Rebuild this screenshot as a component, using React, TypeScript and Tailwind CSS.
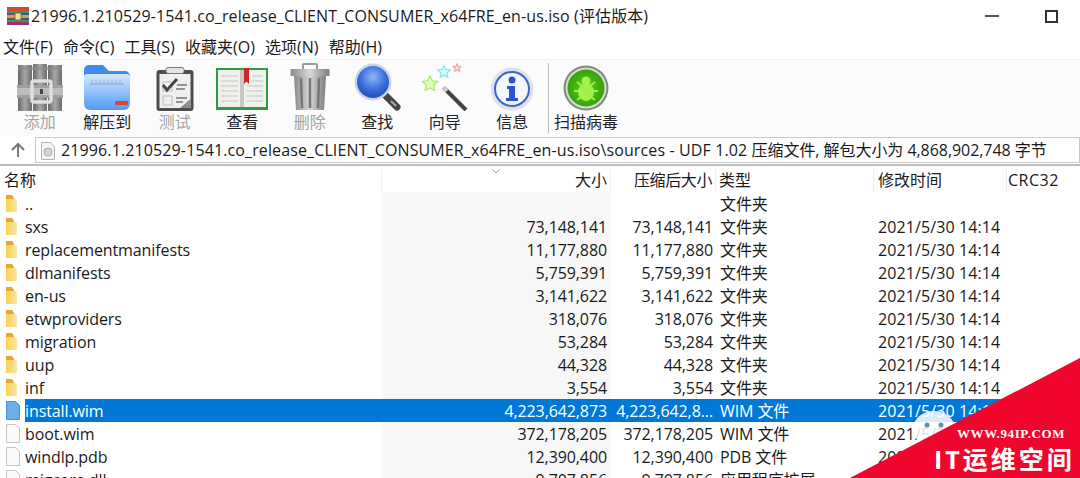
import React from 'react';

const FONT = '"Open Sans", "Noto Sans CJK SC", sans-serif';

interface Row {
  name: string;
  size: string;
  packed: string;
  type: string;
  time: string;
  kind: 'folder' | 'file' | 'wim' | 'dll';
  selected?: boolean;
}

const T = '2021/5/30 14:14';

const rows: Row[] = [
  { name: '..', size: '', packed: '', type: '文件夹', time: '', kind: 'folder' },
  { name: 'sxs', size: '73,148,141', packed: '73,148,141', type: '文件夹', time: T, kind: 'folder' },
  { name: 'replacementmanifests', size: '11,177,880', packed: '11,177,880', type: '文件夹', time: T, kind: 'folder' },
  { name: 'dlmanifests', size: '5,759,391', packed: '5,759,391', type: '文件夹', time: T, kind: 'folder' },
  { name: 'en-us', size: '3,141,622', packed: '3,141,622', type: '文件夹', time: T, kind: 'folder' },
  { name: 'etwproviders', size: '318,076', packed: '318,076', type: '文件夹', time: T, kind: 'folder' },
  { name: 'migration', size: '53,284', packed: '53,284', type: '文件夹', time: T, kind: 'folder' },
  { name: 'uup', size: '44,328', packed: '44,328', type: '文件夹', time: T, kind: 'folder' },
  { name: 'inf', size: '3,554', packed: '3,554', type: '文件夹', time: T, kind: 'folder' },
  { name: 'install.wim', size: '4,223,642,873', packed: '4,223,642,8...', type: 'WIM 文件', time: T, kind: 'wim', selected: true },
  { name: 'boot.wim', size: '372,178,205', packed: '372,178,205', type: 'WIM 文件', time: T, kind: 'file' },
  { name: 'windlp.pdb', size: '12,390,400', packed: '12,390,400', type: 'PDB 文件', time: T, kind: 'file' },
  { name: 'migcore.dll', size: '9,707,856', packed: '9,707,856', type: '应用程序扩展', time: T, kind: 'dll' },
];

const WinRarLogo = () => (
  <svg width="22" height="18" viewBox="0 0 22 18">
    <rect x="0" y="0" width="22" height="18" fill="#7a3a86" />
    <rect x="0" y="0" width="7" height="18" fill="#6d3fa0" />
    <rect x="7" y="0" width="8" height="18" fill="#c23a34" />
    <rect x="15" y="0" width="7" height="18" fill="#2e58b4" />
    <rect x="0" y="0" width="22" height="4" fill="#d2473b" />
    <rect x="0" y="4" width="22" height="2" fill="#3f9a4c" />
    <rect x="0" y="13" width="22" height="2" fill="#3f9a4c" />
    <rect x="0" y="15" width="22" height="3" fill="#9b2f78" />
    <rect x="0" y="8" width="22" height="3" fill="#d8a53d" />
    <rect x="8" y="6" width="6" height="7" fill="#f3dfa0" stroke="#7a5a16" strokeWidth="0.8" />
  </svg>
);

const AddIcon = () => (
  <svg width="48" height="48" viewBox="0 0 48 48">
    <defs>
      <linearGradient id="bk" x1="0" x2="1" y1="0" y2="0">
        <stop offset="0" stopColor="#666" />
        <stop offset="0.5" stopColor="#a8a8a8" />
        <stop offset="1" stopColor="#6a6a6a" />
      </linearGradient>
    </defs>
    <rect x="2" y="2" width="14" height="46" rx="1" fill="url(#bk)" />
    <rect x="17" y="1" width="14" height="47" rx="1" fill="url(#bk)" />
    <rect x="32" y="2" width="14" height="46" rx="1" fill="url(#bk)" />
    <rect x="2" y="4" width="44" height="3" fill="#8b8b8b" opacity="0.7" />
    <rect x="1" y="22" width="46" height="13" fill="#a0a0a0" />
    <rect x="1" y="25" width="46" height="7" fill="#bdbdbd" />
    <rect x="16" y="18" width="19" height="21" rx="2" fill="none" stroke="#dedede" strokeWidth="3.500" />
    <rect x="24" y="26" width="3" height="5" fill="#444" />
  </svg>
);

const ExtractIcon = () => (
  <svg width="48" height="48" viewBox="0 0 48 48">
    <defs>
      <linearGradient id="fd" x1="0" x2="0" y1="0" y2="1">
        <stop offset="0" stopColor="#d5e9fd" />
        <stop offset="1" stopColor="#4f9bf5" />
      </linearGradient>
    </defs>
    <path d="M1 7a5 5 0 0 1 5-5h14l6 6h16a5 5 0 0 1 5 5v6H1z" fill="#3f8cf0" />
    <path d="M1 14c0-2 1-3 3-3h40c2 0 3 1 3 3v27a6 6 0 0 1-6 6H7a6 6 0 0 1-6-6z" fill="url(#fd)" />
    <path d="M7 21h34" stroke="#7f9fc4" strokeWidth="1" />
    <path d="M9 17v4M13 17v4M17 17v4M21 17v4M25 17v4M29 17v4M33 17v4M37 17v4" stroke="#9db7d6" strokeWidth="1" />
    <rect x="32" y="38" width="13" height="4" rx="1" fill="#e2413a" />
  </svg>
);

const TestIcon = () => (
  <svg width="38" height="44" viewBox="0 0 38 44">
    <rect x="0.5" y="3" width="37" height="41" rx="3" fill="#4d4d4d" />
    <rect x="3.5" y="7" width="31" height="34" fill="#efefed" />
    <path d="M24 41l10.500-9v9z" fill="#8c8c8c" />
    <rect x="10" y="0.5" width="18" height="6" rx="2" fill="#e4e4e4" stroke="#777" />
    <rect x="7" y="15" width="9" height="9" fill="#fafafa" stroke="#bbb" />
    <path d="M7 18l4 5 10-11" fill="none" stroke="#444" strokeWidth="3" />
    <rect x="7" y="29" width="9" height="9" fill="none" stroke="#bbb" />
    <path d="M21 18h10M20 22h9M20 31h11M20 35h7" stroke="#777" strokeWidth="1.400" />
  </svg>
);

const ViewIcon = () => (
  <svg width="52" height="44" viewBox="0 0 52 44">
    <rect x="0" y="1" width="52" height="42" fill="#2f9a46" />
    <rect x="2" y="3" width="23.500" height="37" fill="#f0f0ec" />
    <rect x="26.500" y="3" width="23.500" height="37" fill="#f0f0ec" />
    <rect x="24" y="3" width="4" height="37" fill="#c8c8c3" />
    <path d="M5 9h17M5 14h17M5 19h17M5 24h17M5 29h17M5 34h17M36 9h11M36 14h11M31 19h16M31 24h16M31 29h16M31 34h16" stroke="#c4c4c4" strokeWidth="1.200" />
    <path d="M28 1h5v16l-2.500-2.500L28 17z" fill="#c9282d" />
  </svg>
);

const TrashIcon = () => (
  <svg width="40" height="48" viewBox="0 0 40 48">
    <defs>
      <linearGradient id="tr" x1="0" x2="1" y1="0" y2="0">
        <stop offset="0" stopColor="#8a8a8a" />
        <stop offset="0.5" stopColor="#d8d8d8" />
        <stop offset="1" stopColor="#7b7b7b" />
      </linearGradient>
    </defs>
    <rect x="13" y="1" width="14" height="6" rx="1" fill="none" stroke="#9a9a9a" strokeWidth="2" />
    <rect x="0.5" y="6" width="39" height="7" rx="1" fill="url(#tr)" />
    <path d="M4 13h32l-2 34H6z" fill="url(#tr)" />
    <path d="M11 15l1 30M20 15v30M29 15l-1 30" stroke="#777" strokeWidth="2.500" />
  </svg>
);

const SearchIcon = () => (
  <svg width="48" height="48" viewBox="0 0 48 48">
    <defs>
      <radialGradient id="sr" cx="0.5" cy="0.35" r="0.7">
        <stop offset="0" stopColor="#8fb7f5" />
        <stop offset="0.55" stopColor="#3d6fdc" />
        <stop offset="1" stopColor="#1c48b8" />
      </radialGradient>
    </defs>
    <path d="M32 32l12 12" stroke="#444" strokeWidth="7" strokeLinecap="round" />
    <path d="M38 38l5 5" stroke="#aaa" strokeWidth="2" />
    <circle cx="20" cy="19" r="18.500" fill="#c8d4e8" />
    <circle cx="20" cy="19" r="16" fill="url(#sr)" />
  </svg>
);

const Star = ({ x, y, r, color, fill }: { x: number; y: number; r: number; color: string; fill: string }) => {
  const pts = Array.from({ length: 10 }, (_, i) => {
    const a = (Math.PI / 5) * i - Math.PI / 2;
    const d = i % 2 === 0 ? r : r * 0.5;
    return `${(x + d * Math.cos(a)).toFixed(1)},${(y + d * Math.sin(a)).toFixed(1)}`;
  }).join(' ');
  return <polygon points={pts} fill={fill} stroke={color} strokeWidth="1.200" />;
};

const WizardIcon = () => (
  <svg width="48" height="48" viewBox="0 0 48 48">
    <Star x={9} y={21} r={8} color="#a5ec5a" fill="#e2fbc4" />
    <Star x={23} y={9} r={6.500} color="#7fe8ec" fill="#d8f9fb" />
    <Star x={36} y={5} r={4} color="#f2a0a8" fill="#fde4e6" />
    <path d="M23 25l22 22" stroke="#444" strokeWidth="4" />
    <path d="M22 24l4 4" stroke="#ccc" strokeWidth="4" />
  </svg>
);

const InfoIcon = () => (
  <svg width="44" height="44" viewBox="0 0 44 44">
    <circle cx="22" cy="22" r="21.500" fill="#dde2ec" />
    <circle cx="22" cy="22" r="17" fill="#f6f7fb" stroke="#3c63cf" strokeWidth="2" />
    <circle cx="22" cy="13" r="3.500" fill="#2a52d8" />
    <path d="M17 19h8v12h3v3H16v-3h3v-9h-2z" fill="#2a52d8" />
  </svg>
);

const ScanIcon = () => (
  <svg width="46" height="46" viewBox="0 0 46 46">
    <defs>
      <radialGradient id="sc" cx="0.5" cy="0.5" r="0.6">
        <stop offset="0" stopColor="#5ccc1c" />
        <stop offset="1" stopColor="#2f9a0a" />
      </radialGradient>
    </defs>
    <circle cx="23" cy="23" r="22.500" fill="#7c8a7a" />
    <circle cx="23" cy="23" r="20.500" fill="#d5ddd2" />
    <circle cx="23" cy="23" r="18.500" fill="url(#sc)" />
    <ellipse cx="23" cy="27" rx="8" ry="9" fill="#a4f04e" />
    <circle cx="23" cy="16" r="4.500" fill="#a4f04e" />
    <path d="M14 17l5 4M32 17l-5 4M11 26h6M35 26h-6M14 35l5-4M32 35l-5-4" stroke="#a4f04e" strokeWidth="2" />
  </svg>
);

const tools = [
  { label: '添加', icon: <AddIcon />, dim: true },
  { label: '解压到', icon: <ExtractIcon /> },
  { label: '测试', icon: <TestIcon />, dim: true },
  { label: '查看', icon: <ViewIcon /> },
  { label: '删除', icon: <TrashIcon />, dim: true },
  { label: '查找', icon: <SearchIcon /> },
  { label: '向导', icon: <WizardIcon /> },
  { label: '信息', icon: <InfoIcon /> },
];

const FileIcon = ({ kind, selected }: { kind: Row['kind']; selected?: boolean }) => {
  if (kind === 'folder') {
    return (
      <svg width="20" height="18" viewBox="0 0 20 18">
        <defs>
          <linearGradient id="yf" x1="0" x2="1" y1="0" y2="0">
            <stop offset="0" stopColor="#fbd24f" />
            <stop offset="0.6" stopColor="#f9dc82" />
            <stop offset="1" stopColor="#f7e7b2" />
          </linearGradient>
        </defs>
        <path d="M6 0h6l2 3v14H6z" fill="#e6a92a" />
        <path d="M6 4h9l2 1v12H6z" fill="url(#yf)" />
      </svg>
    );
  }
  return (
    <svg width="20" height="19" viewBox="0 0 20 19">
      <path
        d="M6.500 0.500h9l4 4v14h-13z"
        fill={selected ? '#6caee8' : '#fafafa'}
        stroke={selected ? '#4a93d6' : '#c4c4c4'}
      />
      {kind === 'dll' && <rect x="9" y="8" width="8" height="7" fill="#bbb" />}
    </svg>
  );
};

export default function App() {
  return (
    <div
      className="relative h-[478px] w-[1080px] overflow-hidden bg-white text-[16px] leading-[23px] text-[#1a1a1a]"
      style={{ fontFamily: FONT }}
    >
      {/* title bar */}
      <div className="flex h-[32px] items-center pl-[7px]">
        <WinRarLogo />
        <span className="ml-[2px] whitespace-nowrap tracking-[0.11px]">
          21996.1.210529-1541.co_release_CLIENT_CONSUMER_x64FRE_en-us.iso (评估版本)
        </span>
        <div className="ml-auto flex items-center">
          <div className="h-[2px] w-[14px] bg-[#555]" />
          <div className="ml-[46px] mr-[22px] h-[13px] w-[13px] border-2 border-[#333]" />
        </div>
      </div>

      {/* menu bar */}
      <div className="flex h-[27px] items-center gap-[10.200px] pl-[3px] pt-[3px]">
        {['文件(F)', '命令(C)', '工具(S)', '收藏夹(O)', '选项(N)', '帮助(H)'].map((m) => (
          <span key={m} className="whitespace-nowrap">{m}</span>
        ))}
      </div>

      {/* toolbar */}
      <div className="flex h-[77px] items-start border-t border-[#f0f0f0] bg-[#fbfbfb] pl-[6px]">
        {tools.map((t) => (
          <div key={t.label} className="flex w-[67.500px] flex-col items-center">
            <div className="flex h-[51px] items-end justify-center">{t.icon}</div>
            <span className={t.dim ? 'text-[#a3a3a3]' : 'text-[#222]'}>{t.label}</span>
          </div>
        ))}
        <div className="ml-[2px] mt-[3px] h-[70px] w-px bg-[#bdbdbd]" />
        <div className="ml-[1px] flex w-[72px] flex-col items-center">
          <div className="flex h-[51px] items-end justify-center"><ScanIcon /></div>
          <span className="whitespace-nowrap text-[#222]">扫描病毒</span>
        </div>
      </div>

      {/* address bar */}
      <div className="flex h-[30px] items-center border-b-2 border-[#bdbdbd] bg-white">
        <div className="flex w-[35px] justify-center">
          <svg width="16" height="16" viewBox="0 0 16 16">
            <path d="M8 15V2M2 8l6-6 6 6" fill="none" stroke="#777" strokeWidth="2" />
          </svg>
        </div>
        <div className="flex h-[26px] flex-1 items-center overflow-hidden border border-[#c9c9c9] pl-[5px] pt-px">
          <svg width="14" height="18" viewBox="0 0 14 18" className="shrink-0">
            <path d="M0.500 0.500h9l4 4v13h-13z" fill="#f4f4f4" stroke="#b5b5b5" />
            <circle cx="7" cy="10" r="4" fill="#d4d4d4" stroke="#aaa" />
          </svg>
          <span className="ml-[6px] whitespace-nowrap">
            <span className="tracking-[0.12px]">21996.1.210529-1541.co_release_CLIENT_CONSUMER_x64FRE_en-us.iso\sources - UDF 1.02 </span>
            <span className="tracking-[-0.05px]">压缩文件, 解包大小为 4,868,902,748 字节</span>
          </span>
        </div>
      </div>

      {/* list header */}
      <div className="flex h-[26px] items-center pt-[2px]">
        <div className="w-[382px] border-r border-[#eee] pl-[4px]">名称</div>
        <div className="relative w-[229px] border-r border-[#eee] pr-[3px] text-right">
          大小
          <svg width="10" height="6" viewBox="0 0 10 6" className="absolute left-[109px] top-[-1px]">
            <path d="M1 1l4 4 4-4" fill="none" stroke="#aaa" />
          </svg>
        </div>
        <div className="w-[105px] border-r border-[#eee] pr-[3px] text-right tracking-[-0.4px]">压缩后大小</div>
        <div className="w-[158px] border-r border-[#eee] pl-[3px]">类型</div>
        <div className="w-[133px] border-r border-[#eee] pl-[4px]">修改时间</div>
        <div className="pl-[1px] tracking-[0.5px]">CRC32</div>
      </div>

      {/* rows */}
      {rows.map((r) => (
        <div key={r.name} className="flex h-[23px] items-center whitespace-nowrap">
          <div className="flex h-full w-[25px] items-center"><FileIcon kind={r.kind} selected={r.selected} /></div>
          <div className={`flex h-full flex-1 tracking-[-0.1px] ${r.selected ? 'bg-[#0078d7] text-white' : ''}`}>
            <div className="w-[357px] pt-px">{r.name}</div>
            <div className={`w-[229px] pr-[4px] pt-px text-right ${r.selected ? '' : 'bg-[#f7f7f7]'}`}>{r.size}</div>
            <div className="w-[105px] pr-[3px] pt-px text-right">{r.packed}</div>
            <div className="w-[158px] pl-[4px] pt-px">{r.type}</div>
            <div className="pl-[4px] pt-px tracking-[0.1px]">{r.time}</div>
          </div>
        </div>
      ))}

      {/* watermark */}
      <svg width="80" height="70" viewBox="0 0 80 70" className="absolute left-[910px] top-[405px]">
        <ellipse cx="24" cy="24" rx="21" ry="18" fill="#fff" opacity="0.85" />
        <circle cx="17" cy="20" r="2.500" fill="#6f8aa8" />
        <circle cx="31" cy="20" r="2.500" fill="#6f8aa8" />
        <ellipse cx="48" cy="46" rx="16" ry="14" fill="#fff" opacity="0.8" />
      </svg>
      <div className="absolute bottom-0 left-[850px] h-[120px] w-[230px] bg-[#f0062d] [clip-path:polygon(100%_0,100%_100%,0_100%)]" />
      <div className="absolute left-[957px] top-[426px] font-['Liberation_Serif','serif'] text-[13px] font-bold leading-[15px] tracking-[0.6px] text-white whitespace-nowrap">
        WWW.94IP.COM
      </div>
      <div className="absolute left-[934px] top-[442px] text-[25px] font-bold leading-[34px] tracking-[3px] text-white whitespace-nowrap">
        IT运维空间
      </div>
    </div>
  );
}
